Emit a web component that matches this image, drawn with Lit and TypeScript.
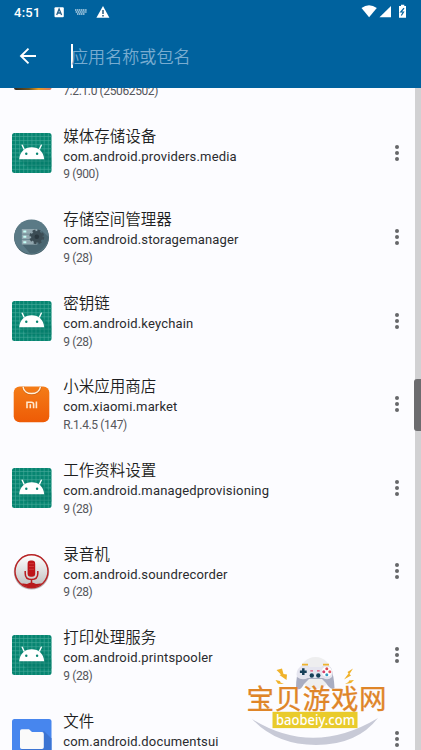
import { LitElement, html, css, svg } from 'lit';
import { customElement, property } from 'lit/decorators.js';

type IconKind = 'robot' | 'storage' | 'market' | 'recorder' | 'files' | 'game';
interface AppItem { name: string; pkg: string; version: string; icon: IconKind; }

const APPS: AppItem[] = [
  { name: '', pkg: '', version: '7.2.1.0 (25062502)', icon: 'game' },
  { name: '媒体存储设备', pkg: 'com.android.providers.media', version: '9 (900)', icon: 'robot' },
  { name: '存储空间管理器', pkg: 'com.android.storagemanager', version: '9 (28)', icon: 'storage' },
  { name: '密钥链', pkg: 'com.android.keychain', version: '9 (28)', icon: 'robot' },
  { name: '小米应用商店', pkg: 'com.xiaomi.market', version: 'R.1.4.5 (147)', icon: 'market' },
  { name: '工作资料设置', pkg: 'com.android.managedprovisioning', version: '9 (28)', icon: 'robot' },
  { name: '录音机', pkg: 'com.android.soundrecorder', version: '9 (28)', icon: 'recorder' },
  { name: '打印处理服务', pkg: 'com.android.printspooler', version: '9 (28)', icon: 'robot' },
  { name: '文件', pkg: 'com.android.documentsui', version: '9 (28)', icon: 'files' },
];

const grid = [3.5, 7.6, 11.7, 15.8, 19.9, 24, 28.1, 32.2, 36.3];

const ICONS = {
  robot: svg`
    <rect width="39.5" height="40" rx="2.5" fill="#078571"/>
    ${grid.map(p => svg`<path d="M${p} 0V40M0 ${p}H39.5" stroke="#4fae9f" stroke-width=".55"/>`)}
    <path d="M8 26.5L15 34H39.5V25L31 17Z" fill="#04705f" opacity=".3"/>
    <path d="M12 16L10.2 12.2M27.5 16L29.3 12.2" stroke="#fff" stroke-width="1.4" stroke-linecap="round"/>
    <path d="M7.2 26.3C7.7 19 12.8 14.3 19.7 14.3S31.7 19 32.2 26.3Z" fill="#fff"/>
    <circle cx="14.3" cy="20.8" r="1.2" fill="#078571"/><circle cx="25.1" cy="20.8" r="1.2" fill="#078571"/>`,
  storage: svg`
    <circle cx="19.5" cy="20.4" r="17.4" fill="#3f5962"/>
    <circle cx="19.5" cy="19.8" r="17.3" fill="#5b7a86"/>
    <path d="M10 27L18 36.5C27 37 36 29 36.8 20L30 14Z" fill="#4a6671"/>
    <g fill="#92a7af"><rect x="9.8" y="12" width="15.5" height="4.8"/><rect x="9.8" y="17.4" width="15.5" height="4.8"/><rect x="9.8" y="22.8" width="15.5" height="4.8"/></g>
    <path d="M11.3 14.4h3M11.3 19.8h3M11.3 25.2h3" stroke="#c6fff7" stroke-width="2"/>
    <circle cx="24.8" cy="19.8" r="5.8" fill="#3c4d55"/>
    <circle cx="24.8" cy="19.8" r="6.2" fill="none" stroke="#3c4d55" stroke-width="2.5" stroke-dasharray="2.8 2.07"/>
    <circle cx="24.8" cy="19.8" r="2.3" fill="#2a383f"/>`,
  market: svg`
    <defs><linearGradient id="mi" x2="0" y2="1"><stop stop-color="#f47c17"/><stop offset="1" stop-color="#ee5b06"/></linearGradient></defs>
    <rect x="1.7" y="2.5" width="35.6" height="35.7" rx="6" fill="url(#mi)"/>
    <path d="M11 2.7C12 12.5 27.3 12.5 28.7 2.7" fill="none" stroke="#b64d0a" stroke-width="2.5" opacity=".45"/>
    <path d="M11 2.6C12 11.9 27.1 11.9 28.5 2.6" fill="none" stroke="#fff1d9" stroke-width="1.5"/>
    <path d="M15 24.3V18.3H19.3Q21.6 18.3 21.6 20.5V24.3M18.3 20.3V24.3M24.4 17.6V24.3" fill="none" stroke="#ffe8ce" stroke-width="1.6"/>`,
  recorder: svg`
    <defs><linearGradient id="rec" x2="0" y2="1"><stop stop-color="#fff"/><stop offset="1" stop-color="#bdbdbd"/></linearGradient><clipPath id="recc"><circle cx="19.5" cy="20.5" r="16"/></clipPath></defs>
    <circle cx="19.5" cy="20.9" r="17.7" fill="#8c8588" opacity=".6"/>
    <circle cx="19.5" cy="20.3" r="16.5" fill="url(#rec)" stroke="#b92325" stroke-width="1.4"/>
    <path clip-path="url(#recc)" d="M3 34.5Q9 31.5 15 33Q19.5 30 24 33Q31 31.5 37 34.5V40H3Z" fill="#b81b1e"/>
    <rect x="15.6" y="9.5" width="7.6" height="16.3" rx="3.2" fill="#bd1519"/>
    <path d="M17 12.7h5M17 15.5h5M17 18.3h5" stroke="#d9494a" stroke-width=".6"/>
    <path d="M13.2 20V22.5Q13.2 28.5 19.5 28.5T25.8 22.5V20M19.5 28.5V33.5" fill="none" stroke="#b81b1e" stroke-width="1.5"/>`,
  files: svg`
    <rect width="39.5" height="40" rx="2.5" fill="#4786ee"/>
    <path d="M32 12L39.5 19.5V40H18L9 30Z" fill="#3c74d2"/>
    <path d="M8 12Q8 10.2 9.8 10.2H17L20 13H30Q31.8 13 31.8 15V28.2Q31.8 30 30 30H9.8Q8 30 8 28.2Z" fill="#fafafa"/>`,
  game: svg`
    <defs><linearGradient id="gm"><stop stop-color="#332a22"/><stop offset=".4" stop-color="#6b521f"/><stop offset=".65" stop-color="#e89b24"/><stop offset="1" stop-color="#d87560"/></linearGradient></defs>
    <rect x="2" width="37.5" height="40" rx="2" fill="url(#gm)"/>`,
};

@customElement('app-row')
class AppRow extends LitElement {
  @property({ attribute: false }) item!: AppItem;
  static styles = css`
    :host { display: flex; box-sizing: border-box; height: 83.6px; padding-left: 12px; align-items: center; color: #1d1e21; }
    .icon { width: 40px; height: 40px; flex: none; }
    .text { flex: 1; margin-left: 11.2px; height: 59px; display: grid; grid-template-rows: 23.5px 18.5px 17px; align-items: center; white-space: nowrap; }
    .name { font: 350 15.5px/23px Roboto, "Noto Sans CJK SC", sans-serif; padding-top: 3px; }
    .pkg { font: 13px/18px Roboto, sans-serif; letter-spacing: .16px; color: #2a2b2e; }
    .version { font: 12px/16px Roboto, sans-serif; letter-spacing: -.38px; color: #56575c; }
    .more { width: 6px; height: 18px; margin-right: 15px; flex: none; fill: #66676a; }
  `;
  render() {
    const { name, pkg, version, icon } = this.item;
    return html`
      <svg class="icon" viewBox="0 0 40 40">${ICONS[icon]}</svg>
      <div class="text">
        <span class="name">${name}</span><span class="pkg">${pkg}</span><span class="version">${version}</span>
      </div>
      <svg class="more" viewBox="0 0 6 18"><circle cx="3" cy="3" r="2"/><circle cx="3" cy="9" r="2"/><circle cx="3" cy="15" r="2"/></svg>`;
  }
}

@customElement('app-root')
class AppRoot extends LitElement {
  static styles = css`
    :host { display: flex; flex-direction: column; height: 750px; width: 421px; position: relative; overflow: hidden; background: #fcfcff; }
    header { background: #00629e; height: 88px; flex: none; color: #fff; display: flex; flex-direction: column; }
    .status { height: 24px; display: flex; align-items: center; padding: 0 14px; }
    .time { font: 500 13px/24px Roboto, sans-serif; letter-spacing: .25px; width: 40px; padding-top: 1px; }
    .left { width: 58px; height: 24px; }
    .right { width: 50px; height: 24px; margin-left: auto; }
    .bar { height: 64px; display: flex; align-items: center; padding-left: 19px; }
    .back { width: 18px; height: 18px; margin-right: 34px; }
    .caret { width: 2px; height: 24px; background: #fff; margin-right: -2px; }
    .hint { font: 17.1px/24px "Noto Sans CJK SC", sans-serif; font-weight: 350; color: #78acd0; }
    .body { flex: 1; min-height: 0; display: flex; }
    .clip { flex: 1; overflow: hidden; }
    .list { margin-top: -60px; }
    .track { width: 6px; background: #d1d1d3; display: flex; justify-content: flex-end; flex: none; }
    .thumb { width: 7px; height: 52px; flex: none; border-radius: 3px 0 0 3px; background: #6c6c6f; margin-top: 291px; }
    .mark { position: absolute; left: 240px; top: 650px; width: 150px; height: 100px; }
    .mark-title { font: 400 27.5px "Noto Sans CJK SC", sans-serif; }
    .mark-url { font: 500 15px "Noto Sans", sans-serif; }
  `;
  render() {
    return html`
      <header>
        <div class="status">
          <span class="time">4:51</span>
          <svg class="left" viewBox="0 0 58 24">
            <rect x=".5" y="7.2" width="9.3" height="10" rx="1" fill="#fff"/>
            <path d="M2.7 15L5.1 9L7.6 15M3.5 13H6.8" fill="none" stroke="#27618a" stroke-width="1.3"/>
            <path d="M21 10h12M21.7 12h10.8M23 14h8" stroke="#b2d1e5" stroke-width="1.3" stroke-dasharray="1.4 .5"/>
            <path d="M49 6L55.4 17.8H42.4Z" fill="#fff"/>
            <path d="M49 10V14M49 15V16.4" stroke="#174e73" stroke-width="1.4"/>
          </svg>
          <svg class="right" viewBox="0 0 50 24">
            <path d="M4.5 8.1Q12 2.2 19.8 8.1L12.1 17.2Z" fill="#fff"/>
            <path d="M34 6V17.2H22.5Z" fill="#fff"/>
            <path d="M42 6H44V4.8H47.3V6H49V17.8H42Z" fill="#fff"/>
            <path d="M47 8.2L43.8 12H46.5L44.3 15.5" fill="none" stroke="#00629e" stroke-width="1.2"/>
          </svg>
        </div>
        <div class="bar">
          <svg class="back" viewBox="0 0 18 18"><path d="M17 9H2.5M9.5 1.6L2 9L9.5 16.4" fill="none" stroke="#fff" stroke-width="1.9"/></svg>
          <i class="caret"></i><span class="hint">应用名称或包名</span>
        </div>
      </header>
      <div class="body">
        <div class="clip"><div class="list">${APPS.map(a => html`<app-row .item=${a}></app-row>`)}</div></div>
        <div class="track"><i class="thumb"></i></div>
      </div>
      <svg class="mark" viewBox="0 0 150 100">
        <circle cx="75.5" cy="23" r="16" fill="#eeeeef"/>
        <path d="M12 69Q73 107 138 68Q117 95 76 95Q36 95 12 69Z" fill="#c8cad7"/>
        <g fill="#f0b22a">
          <path d="M36.5 20L42 18.6L43.5 24L47 24.5L46.5 30L39.5 25L41 24.5Z"/><path d="M35.5 30L40 31L40.5 32.5L44 34L38 33.7Z"/>
          <path d="M113 18.5L107.5 22L108.5 23.5L104 29.5L111 25.5L109.5 24Z"/><path d="M114 30L109 30.5L108.5 32L105 34L111 33Z"/>
        </g>
        <path d="M62 16.5Q65 14.8 68 16.5L71 18H80L83 16.5Q87 14.8 91 18Q94 26 94.5 38Q91 41 86 33L82 29H69L64 34Q60 42 56 38Q56 25 60 18Z" fill="#a9adc1"/>
        <path d="M61 16Q66 14 70 17H81Q86 14 90 17Q94 21 92 27Q88 31 83 28H68Q62 31 57 27Q55 21 61 16Z" fill="#e5e5ef"/>
        <path d="M62 14.7H68M83 14.7H89" stroke="#eeb22c" stroke-width="1.8"/>
        <path d="M63.3 18.3V25.1M59.9 21.7H66.7" stroke="#163e58" stroke-width="2.5"/>
        <circle cx="86.8" cy="21.8" r="5" fill="#fff"/>
        <circle cx="86.8" cy="18.8" r="1.5" fill="#d84a53"/><circle cx="89.8" cy="21.8" r="1.5" fill="#e35864"/><circle cx="86.8" cy="24.8" r="1.5" fill="#319ac0"/><circle cx="83.8" cy="21.8" r="1.5" fill="#d23f6c"/>
        <path d="M70.3 20.8H73M77 20.8H79.7" stroke="#e25678" stroke-width="1.3"/>
        <circle cx="71.8" cy="25.5" r="2.2" fill="#174059"/><circle cx="78.3" cy="25.5" r="2.2" fill="#174059"/>
        <text class="mark-title" x="6.5" y="58.6" textLength="140" fill="#df8528" stroke="#df8528" stroke-width=".3">宝贝游戏网</text>
        <rect x="32.5" y="61.8" width="85" height="16.3" fill="#e9cb2b"/>
        <text class="mark-url" x="36" y="74.7" textLength="79" lengthAdjust="spacingAndGlyphs" fill="#fff">baobeiy.com</text>
      </svg>`;
  }
}
